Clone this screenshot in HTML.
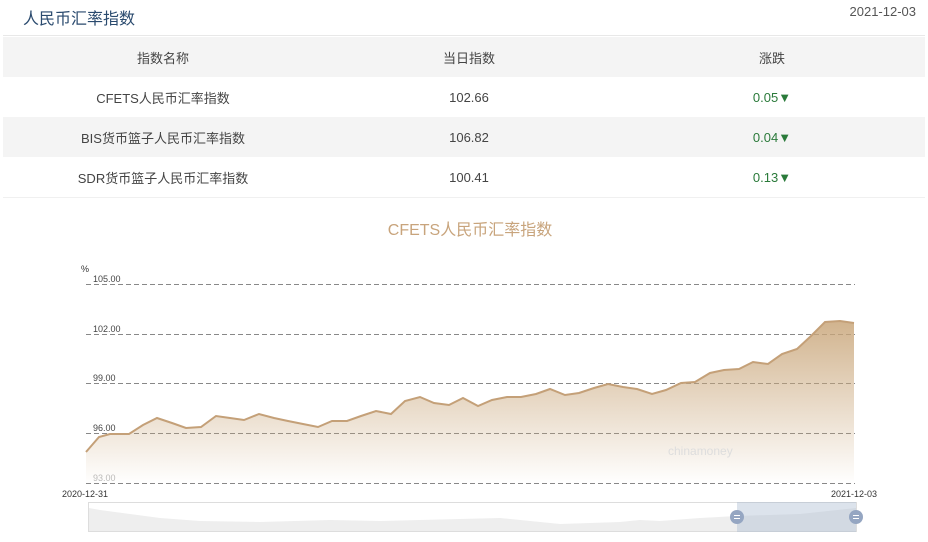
<!DOCTYPE html>
<html><head><meta charset="utf-8"><style>
body{margin:0;width:928px;height:542px;background:#fff;font-family:"Liberation Sans","Noto Sans CJK SC",sans-serif;overflow:hidden;position:relative}
.t{position:absolute;left:23px;top:5px;font-size:16px;color:#2a4a6e}
.d{position:absolute;right:12px;top:4px;font-size:13px;color:#555}
table{position:absolute;left:3px;top:37px;width:922px;border-collapse:collapse;font-size:13px;color:#444}
td{height:40px;text-align:center;padding:0}
tr.g td{background:#f4f4f4}
.up{color:#2a7a3a}
.sep{position:absolute;left:3px;top:35px;width:922px;border-top:1px solid #e8e8e8}
</style></head><body>
<div class="t">人民币汇率指数</div><div class="d">2021-12-03</div>
<div class="sep"></div>
<table>
<tr class="g"><td style="width:320px">指数名称</td><td style="width:292px">当日指数</td><td style="padding-left:4px">涨跌</td></tr>
<tr><td>CFETS人民币汇率指数</td><td>102.66</td><td class="up" style="padding-left:4px">0.05▼</td></tr>
<tr class="g"><td>BIS货币篮子人民币汇率指数</td><td>106.82</td><td class="up" style="padding-left:4px">0.04▼</td></tr>
<tr><td>SDR货币篮子人民币汇率指数</td><td>100.41</td><td class="up" style="padding-left:4px">0.13▼</td></tr>
</table>
<div style="position:absolute;left:3px;top:197px;width:922px;border-top:1px solid #f0f0f0"></div>
<svg width="928" height="542" style="position:absolute;left:0;top:0">
<defs><linearGradient id="g" x1="0" y1="0" x2="0" y2="1"><stop offset="0" stop-color="#c9a67a" stop-opacity=".85"/><stop offset="1" stop-color="#c9a67a" stop-opacity="0"/></linearGradient></defs>
<text x="470" y="235" font-size="16" fill="#c8a47c" text-anchor="middle">CFETS人民币汇率指数</text>
<text x="81" y="272" font-size="9" fill="#333">%</text>
<g font-size="9" fill="#444"><text x="93" y="282">105.00</text><text x="93" y="332">102.00</text><text x="93" y="381">99.00</text><text x="93" y="431">96.00</text><text x="93" y="481" fill="#bbb">93.00</text></g>
<g stroke="#888" stroke-dasharray="5,3" stroke-width="1"><line x1="86" y1="284.5" x2="855" y2="284.5"/><line x1="86" y1="334.5" x2="855" y2="334.5"/><line x1="86" y1="383.5" x2="855" y2="383.5"/><line x1="86" y1="433.5" x2="855" y2="433.5"/><line x1="86" y1="483.5" x2="855" y2="483.5"/></g>
<path d="M86,452 L99,437 110,434 129,434 143,425 157,418 172,423 186,428 201,427 216,416 230,418 244,420 259,414 274,418 288,421 303,424 318,427 332,421 347,421 361,416 376,411 391,414 405,401 420,397 434,403 449,405 463,398 478,406 492,400 507,397 521,397 536,394 550,389 565,395 579,393 594,388 608,384 623,387 637,389 652,394 666,390 681,383 695,382 710,373 724,370 739,369 753,362 768,364 782,354 797,349 811,336 825,322 840,321 854,323 L854,484 L86,484Z" fill="url(#g)"/>
<path d="M86,452 L99,437 110,434 129,434 143,425 157,418 172,423 186,428 201,427 216,416 230,418 244,420 259,414 274,418 288,421 303,424 318,427 332,421 347,421 361,416 376,411 391,414 405,401 420,397 434,403 449,405 463,398 478,406 492,400 507,397 521,397 536,394 550,389 565,395 579,393 594,388 608,384 623,387 637,389 652,394 666,390 681,383 695,382 710,373 724,370 739,369 753,362 768,364 782,354 797,349 811,336 825,322 840,321 854,323" fill="none" stroke="#c4a078" stroke-width="2"/>
<text x="668" y="455" font-size="12" fill="#ddd">chinamoney</text>
<g font-size="9" fill="#333"><text x="62" y="497">2020-12-31</text><text x="831" y="497">2021-12-03</text></g>
<rect x="88.5" y="502.5" width="768" height="29" fill="#fff" stroke="#ddd"/>
<path d="M89,508 L100,510 130,514 160,518 200,521 260,522 330,520 380,521 420,520 500,518 560,524 620,522 640,520 660,521 700,518 737,516 800,514 856,508 L856,531 L89,531Z" fill="#eeeeee"/>
<rect x="737" y="502" width="119" height="30" fill="#a8b8d0" fill-opacity=".4"/>
<circle cx="737" cy="517" r="7" fill="#95a6c2"/><circle cx="856" cy="517" r="7" fill="#95a6c2"/>
<g stroke="#fff" stroke-width="1"><line x1="734" y1="515.5" x2="740" y2="515.5"/><line x1="734" y1="518.5" x2="740" y2="518.5"/><line x1="853" y1="515.5" x2="859" y2="515.5"/><line x1="853" y1="518.5" x2="859" y2="518.5"/></g>
</svg>
</body></html>
